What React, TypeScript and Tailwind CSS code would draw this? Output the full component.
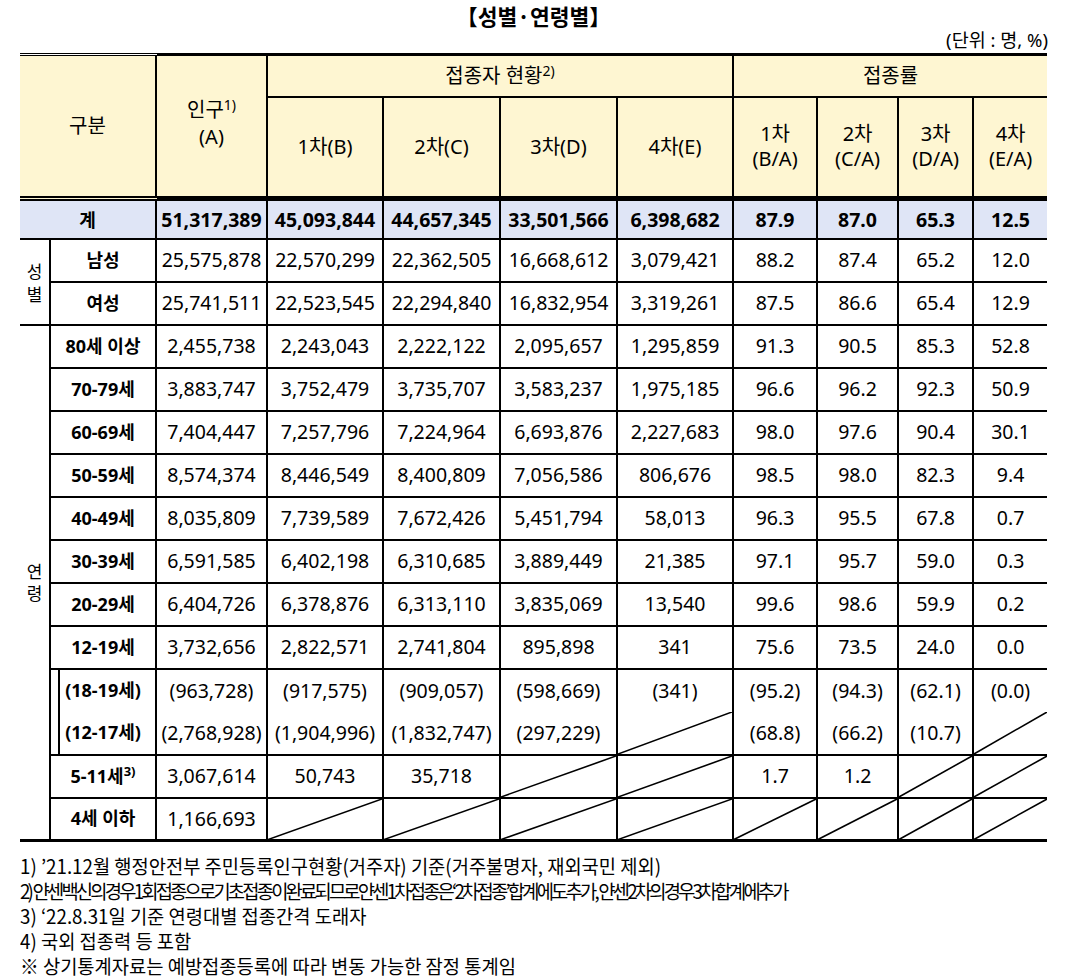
import React from "react";

type Cell = string | null;
type Row = { label: React.ReactNode; vals: Cell[]; top: "solid" | "dotted" | "none"; nested?: boolean; last?: boolean };

const Diag = () => (
  <svg className="absolute inset-0 w-full h-full" viewBox="0 0 100 100" preserveAspectRatio="none">
    <line x1="0" y1="100" x2="100" y2="0" stroke="#000" strokeWidth="1.6" vectorEffect="non-scaling-stroke" />
  </svg>
);

const sex: Row[] = [
  { label: "남성", vals: ["25,575,878", "22,570,299", "22,362,505", "16,668,612", "3,079,421", "88.2", "87.4", "65.2", "12.0"], top: "solid" },
  { label: "여성", vals: ["25,741,511", "22,523,545", "22,294,840", "16,832,954", "3,319,261", "87.5", "86.6", "65.4", "12.9"], top: "dotted" },
];

const age: Row[] = [
  { label: "80세 이상", vals: ["2,455,738", "2,243,043", "2,222,122", "2,095,657", "1,295,859", "91.3", "90.5", "85.3", "52.8"], top: "solid" },
  { label: "70-79세", vals: ["3,883,747", "3,752,479", "3,735,707", "3,583,237", "1,975,185", "96.6", "96.2", "92.3", "50.9"], top: "dotted" },
  { label: "60-69세", vals: ["7,404,447", "7,257,796", "7,224,964", "6,693,876", "2,227,683", "98.0", "97.6", "90.4", "30.1"], top: "dotted" },
  { label: "50-59세", vals: ["8,574,374", "8,446,549", "8,400,809", "7,056,586", "806,676", "98.5", "98.0", "82.3", "9.4"], top: "dotted" },
  { label: "40-49세", vals: ["8,035,809", "7,739,589", "7,672,426", "5,451,794", "58,013", "96.3", "95.5", "67.8", "0.7"], top: "dotted" },
  { label: "30-39세", vals: ["6,591,585", "6,402,198", "6,310,685", "3,889,449", "21,385", "97.1", "95.7", "59.0", "0.3"], top: "dotted" },
  { label: "20-29세", vals: ["6,404,726", "6,378,876", "6,313,110", "3,835,069", "13,540", "99.6", "98.6", "59.9", "0.2"], top: "dotted" },
  { label: "12-19세", vals: ["3,732,656", "2,822,571", "2,741,804", "895,898", "341", "75.6", "73.5", "24.0", "0.0"], top: "dotted" },
  { label: "(18-19세)", vals: ["(963,728)", "(917,575)", "(909,057)", "(598,669)", "(341)", "(95.2)", "(94.3)", "(62.1)", "(0.0)"], top: "solid", nested: true },
  { label: "(12-17세)", vals: ["(2,768,928)", "(1,904,996)", "(1,832,747)", "(297,229)", null, "(68.8)", "(66.2)", "(10.7)", null], top: "none", nested: true },
  {
    label: (
      <>
        5-11세<sup className="text-[13px]">3)</sup>
      </>
    ),
    vals: ["3,067,614", "50,743", "35,718", null, null, "1.7", "1.2", null, null],
    top: "solid",
  },
  { label: "4세 이하", vals: ["1,166,693", null, null, null, null, null, null, null, null], top: "dotted", last: true },
];

const topCls = (t: Row["top"]) =>
  t === "solid" ? "border-t-2 border-t-black border-solid" : t === "dotted" ? "border-t-2 border-t-black border-dotted" : "";

function BodyRow({ r, group }: { r: Row; group?: React.ReactNode }) {
  const tc = topCls(r.top);
  const bc = r.last ? "border-b-[3px] border-b-black" : "";
  return (
    <tr className="h-[43px]">
      {group}
      <td
        className={`border-l-2 border-l-black border-solid ${tc} ${bc} text-center font-bold text-[18px] p-0 whitespace-nowrap ${
          r.nested ? "shadow-[inset_7px_0_0_#fff,inset_9px_0_0_#000]" : ""
        }`}
      >
        {r.label}
      </td>
      {r.vals.map((v, i) => (
        <td
          key={i}
          className={`border-l-2 border-l-black border-solid ${tc} ${bc} text-center text-[19.5px] p-0 whitespace-nowrap ${
            v === null ? "relative" : ""
          }`}
        >
          {v === null ? <Diag /> : v}
        </td>
      ))}
    </tr>
  );
}

export default function App() {
  return (
    <div className="w-[1080px] h-[978px] bg-white text-black font-['Noto_Sans','Noto_Sans_CJK_KR',sans-serif]">
      <div className="ml-[20px] w-[1027px]">
        <div className="h-[32px] flex items-center justify-center text-[21.5px] font-bold font-['Noto_Sans_CJK_KR',sans-serif]">
          【성별·연령별】
        </div>
        <div className="h-[21px] leading-[16px] text-right text-[18.5px] -mr-[1px]">
          (단위 : 명, %)
        </div>
        <table className="border-collapse table-fixed w-[1027px]">
          <colgroup>
            <col className="w-[30px]" />
            <col className="w-[106px]" />
            <col className="w-[111px]" />
            <col className="w-[116px]" />
            <col className="w-[117px]" />
            <col className="w-[117px]" />
            <col className="w-[116px]" />
            <col className="w-[84px]" />
            <col className="w-[81px]" />
            <col className="w-[75px]" />
            <col className="w-[74px]" />
          </colgroup>
          <thead>
            <tr className="h-[42px] bg-[#fef6d2] text-[20px]">
              <th
                colSpan={2}
                rowSpan={2}
                className="font-normal border-t-[3px] border-t-black border-b-[5px] border-b-black border-double p-0"
              >
                구분
              </th>
              <th
                rowSpan={2}
                className="font-normal border-l-2 border-l-black border-solid border-t-[3px] border-t-black border-b-[5px] border-b-black border-double p-0 leading-[27px]"
              >
                <div className="-mt-[6px]">
                  인구<sup className="text-[14px]">1)</sup>
                </div>
                <div>(A)</div>
              </th>
              <th colSpan={4} className="font-normal border-l-2 border-l-black border-solid border-t-[3px] border-t-black p-0">
                접종자 현황<sup className="text-[14px]">2)</sup>
              </th>
              <th colSpan={4} className="font-normal border-l-2 border-l-black border-solid border-t-[3px] border-t-black p-0">
                접종률
              </th>
            </tr>
            <tr className="h-[102px] bg-[#fef6d2] text-[20px]">
              {["1차(B)", "2차(C)", "3차(D)", "4차(E)"].map((t) => (
                <th
                  key={t}
                  className="font-normal border-l-2 border-l-black border-solid border-t-2 border-t-black border-b-[5px] border-b-black border-double p-0"
                >
                  {t}
                </th>
              ))}
              {[
                ["1차", "(B/A)"],
                ["2차", "(C/A)"],
                ["3차", "(D/A)"],
                ["4차", "(E/A)"],
              ].map(([a, b]) => (
                <th
                  key={a}
                  className="font-normal border-l-2 border-l-black border-solid border-t-2 border-t-black border-b-[5px] border-b-black border-double p-0 leading-[25px] -translate-y-[1px]"
                >
                  <div>{a}</div>
                  <div>{b}</div>
                </th>
              ))}
            </tr>
          </thead>
          <tbody>
            <tr className="h-[40px] bg-[#dfe5f6] font-bold">
              <td colSpan={2} className="text-center text-[18px] p-0 font-['Noto_Sans_CJK_KR',sans-serif]">
                계
              </td>
              {["51,317,389", "45,093,844", "44,657,345", "33,501,566", "6,398,682", "87.9", "87.0", "65.3", "12.5"].map((v, i) => (
                <td key={i} className="border-l-2 border-l-black border-solid text-center text-[19.5px] p-0 whitespace-nowrap">
                  {v}
                </td>
              ))}
            </tr>
            {sex.map((r, i) => (
              <BodyRow
                key={i}
                r={r}
                group={
                  i === 0 ? (
                    <td rowSpan={2} className="border-t-2 border-t-black border-solid p-0 text-center text-[17px] leading-[23px] font-['Noto_Sans_CJK_KR',sans-serif]">
                      <div>성</div>
                      <div>별</div>
                    </td>
                  ) : undefined
                }
              />
            ))}
            {age.map((r, i) => (
              <BodyRow
                key={i}
                r={r}
                group={
                  i === 0 ? (
                    <td
                      rowSpan={12}
                      className="border-t-2 border-t-black border-solid border-b-[3px] border-b-black p-0 text-center text-[17px] leading-[22px] font-['Noto_Sans_CJK_KR',sans-serif]"
                    >
                      <div>연</div>
                      <div>령</div>
                    </td>
                  ) : undefined
                }
              />
            ))}
          </tbody>
        </table>
      </div>
      <div className="ml-[20px] mt-[11px] text-[19.5px] leading-[25px] font-['Noto_Sans_CJK_KR',sans-serif]">
        <div className="origin-left scale-x-[0.96] whitespace-nowrap">
          1) ’21.12월 행정안전부 주민등록인구현황(거주자) 기준(거주불명자, 재외국민 제외)
        </div>
        <div className="origin-left scale-x-[0.96] whitespace-nowrap tracking-[-2.9px]">
          2) 얀센백신의경우1회접종으로기초접종이완료되므로얀센1차접종은‘2차접종’합계에도추가, 얀센2차의경우3차합계에추가
        </div>
        <div className="origin-left scale-x-[0.96] whitespace-nowrap">3) ‘22.8.31일 기준 연령대별 접종간격 도래자</div>
        <div className="origin-left scale-x-[0.96] whitespace-nowrap">4) 국외 접종력 등 포함</div>
        <div className="origin-left scale-x-[0.96] whitespace-nowrap">※ 상기통계자료는 예방접종등록에 따라 변동 가능한 잠정 통계임</div>
      </div>
    </div>
  );
}
